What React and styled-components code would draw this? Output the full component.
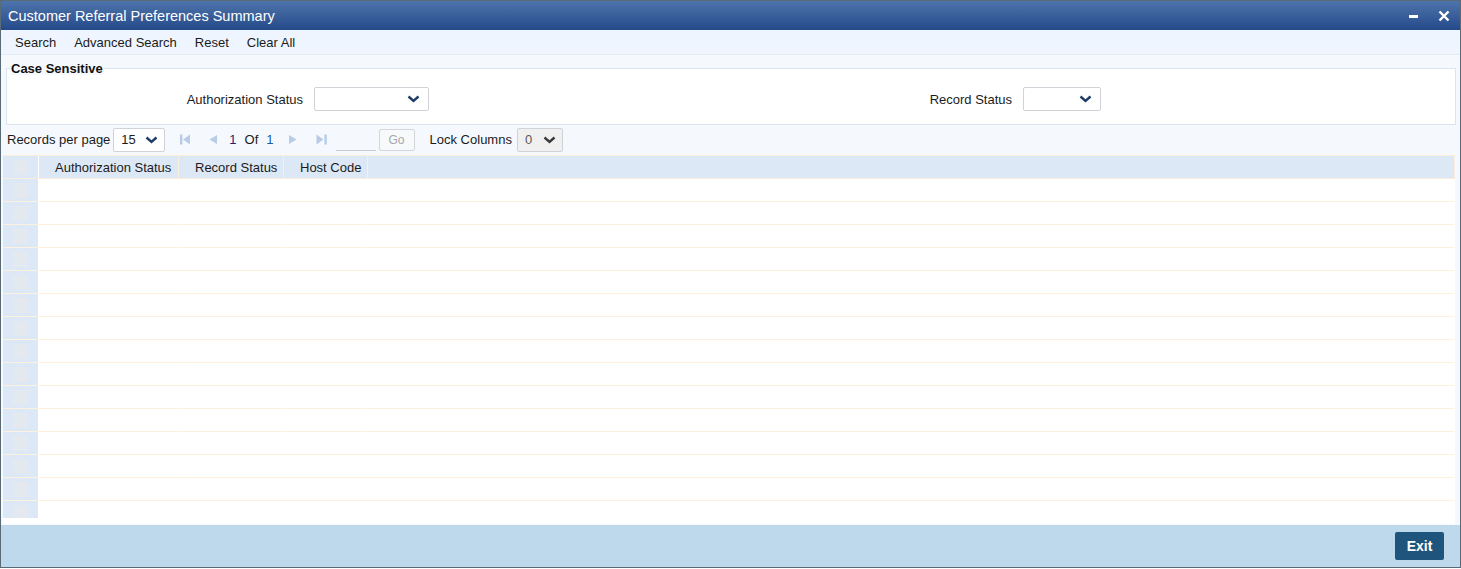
import React from 'react'
import styled, { createGlobalStyle } from 'styled-components'

const GlobalStyle = createGlobalStyle`
  html, body {
    margin: 0;
    padding: 0;
    background: #ffffff;
    font-family: 'Liberation Sans', Arial, sans-serif;
  }
  * { box-sizing: border-box; }
`

const Chevron = ({ color = '#1d3c66' }) => (
  <svg width="13" height="8" viewBox="0 0 13 8">
    <path d="M1.5 1.5 L6.5 6 L11.5 1.5" fill="none" stroke={color} strokeWidth="2.4" />
  </svg>
)

const PageIcon = ({ type }) => (
  <svg width="11" height="11" viewBox="0 0 11 11">
    {type === 'first' && (
      <>
        <rect x="0" y="0.5" width="2.4" height="10" fill="#b7cce6" />
        <path d="M10 0.5 L3 5.5 L10 10.5 Z" fill="#b7cce6" />
      </>
    )}
    {type === 'prev' && <path d="M9 1 L1.5 5.5 L9 10 Z" fill="#b7cce6" />}
    {type === 'next' && <path d="M2 1 L9.5 5.5 L2 10 Z" fill="#b7cce6" />}
    {type === 'last' && (
      <>
        <path d="M0.5 0.5 L7.5 5.5 L0.5 10.5 Z" fill="#b7cce6" />
        <rect x="8.4" y="0.5" width="2.4" height="10" fill="#b7cce6" />
      </>
    )}
  </svg>
)

const columns = [
  { title: 'Authorization Status', width: 140 },
  { title: 'Record Status', width: 105 },
  { title: 'Host Code', width: 84 },
]

const rows = Array.from({ length: 15 }, (_, i) => i)

export default function App() {
  return (
    <>
      <GlobalStyle />
      <Window>
        <TitleBar>
          <Title>Customer Referral Preferences Summary</Title>
          <WindowControls>
            <Minimize />
            <svg width="12" height="12" viewBox="0 0 12 12">
              <path d="M1.5 1.5 L10.5 10.5 M10.5 1.5 L1.5 10.5" stroke="#fff" strokeWidth="2.4" />
            </svg>
          </WindowControls>
        </TitleBar>

        <Toolbar>
          <ToolItem>Search</ToolItem>
          <ToolItem>Advanced Search</ToolItem>
          <ToolItem>Reset</ToolItem>
          <ToolItem>Clear All</ToolItem>
        </Toolbar>

        <Main>
          <Fieldset>
            <Legend>Case Sensitive</Legend>
            <FieldRow>
              <Field $width={723}>
                <Label $width={307}>Authorization Status</Label>
                <Select $width={115}>
                  <Chevron />
                </Select>
              </Field>
              <Field>
                <Label $width={293}>Record Status</Label>
                <Select $width={78}>
                  <Chevron />
                </Select>
              </Field>
            </FieldRow>
          </Fieldset>

          <Pager>
            <PagerText>Records per page</PagerText>
            <SmallSelect $ml={3} $width={52}>
              <span>15</span>
              <Chevron />
            </SmallSelect>
            <IconSlot $ml={15}><PageIcon type="first" /></IconSlot>
            <IconSlot $ml={17}><PageIcon type="prev" /></IconSlot>
            <PageNum $ml={10} $color="#2b1c6e">1</PageNum>
            <PagerText $ml={8}>Of</PagerText>
            <PageNum $ml={8} $color="#1d5aa8">1</PageNum>
            <IconSlot $ml={13}><PageIcon type="next" /></IconSlot>
            <IconSlot $ml={18}><PageIcon type="last" /></IconSlot>
            <PageInput />
            <GoButton>Go</GoButton>
            <PagerText $ml={15}>Lock Columns</PagerText>
            <SmallSelect $ml={5} $width={46} $disabled>
              <span>0</span>
              <Chevron color="#3a3a3a" />
            </SmallSelect>
          </Pager>

          <Table>
            <HeaderRow>
              <CheckCell $header>
                <CheckBox />
              </CheckCell>
              {columns.map((c) => (
                <HeaderCell key={c.title} $width={c.width}>
                  {c.title}
                </HeaderCell>
              ))}
              <Filler />
            </HeaderRow>
            <Body>
              {rows.map((r) => (
                <Row key={r}>
                  <CheckCell>
                    <CheckBox />
                  </CheckCell>
                  {columns.map((c) => (
                    <Cell key={c.title} $width={c.width} />
                  ))}
                  <Cell />
                </Row>
              ))}
            </Body>
          </Table>
        </Main>

        <Footer>
          <ExitButton>Exit</ExitButton>
        </Footer>
      </Window>
    </>
  )
}

const Window = styled.div`
  display: flex;
  flex-direction: column;
  width: 1461px;
  height: 568px;
  border: 1px solid #5a6b78;
  overflow: hidden;
  background: #f5f9fe;
`

const TitleBar = styled.div`
  height: 29px;
  flex-shrink: 0;
  display: flex;
  align-items: center;
  justify-content: space-between;
  padding: 0 10px 0 7px;
  background: linear-gradient(to bottom, #4d74ac 0%, #3a5f9a 50%, #23498a 100%);
`

const Title = styled.div`
  color: #ffffff;
  font-size: 14.5px;
`

const WindowControls = styled.div`
  display: flex;
  align-items: center;
  gap: 20px;
`

const Minimize = styled.span`
  display: block;
  width: 9px;
  height: 3px;
  background: #ffffff;
  margin-top: 2px;
`

const Toolbar = styled.div`
  height: 25px;
  flex-shrink: 0;
  display: flex;
  align-items: center;
  gap: 18px;
  padding-left: 14px;
  background: #eef5fe;
  border-bottom: 1px solid #e2eaf4;
`

const ToolItem = styled.span`
  font-size: 13px;
  color: #1b1b1b;
`

const Main = styled.div`
  flex: 1;
  display: flex;
  flex-direction: column;
  background: #f5f9fe;
`

const Fieldset = styled.fieldset`
  margin: 7px 4px 0 5px;
  padding: 12px 0 13px 0;
  border: 1px solid #dbe4f1;
  background: #ffffff;
  min-width: 0;
`

const Legend = styled.legend`
  padding: 0 1px;
  margin-left: 3px;
  font-size: 13px;
  line-height: 13px;
  font-weight: bold;
  color: #111;
  background: #f5f9fe;
`

const FieldRow = styled.div`
  display: flex;
  align-items: center;
  height: 24px;
`

const Field = styled.div`
  display: flex;
  align-items: center;
  width: ${(p) => (p.$width ? `${p.$width}px` : 'auto')};
`

const Label = styled.label`
  width: ${(p) => p.$width}px;
  text-align: right;
  padding-right: 11px;
  font-size: 13px;
  color: #1b1b1b;
`

const Select = styled.div`
  width: ${(p) => p.$width}px;
  height: 24px;
  display: flex;
  align-items: center;
  justify-content: flex-end;
  padding-right: 8px;
  border: 1px solid #cfd3d8;
  border-radius: 2px;
  background: #ffffff;
`

const Pager = styled.div`
  display: flex;
  align-items: center;
  height: 25px;
  margin-top: 2px;
  padding-left: 6px;
`

const PagerText = styled.span`
  margin-left: ${(p) => p.$ml || 0}px;
  font-size: 13px;
  color: #1b1b1b;
`

const PageNum = styled.span`
  margin-left: ${(p) => p.$ml || 0}px;
  font-size: 13px;
  color: ${(p) => p.$color};
`

const SmallSelect = styled.div`
  margin-left: ${(p) => p.$ml || 0}px;
  width: ${(p) => p.$width}px;
  height: 24px;
  display: flex;
  align-items: center;
  justify-content: space-between;
  padding: 0 6px 0 7px;
  border: 1px solid #cfd3d8;
  border-radius: 2px;
  background: ${(p) => (p.$disabled ? '#f0f0f0' : '#ffffff')};
  font-size: 13px;
  color: ${(p) => (p.$disabled ? '#5a5a5a' : '#1b1b1b')};
`

const IconSlot = styled.span`
  display: flex;
  align-items: center;
  margin-left: ${(p) => p.$ml || 0}px;
`

const PageInput = styled.div`
  width: 40px;
  height: 22px;
  margin-left: 9px;
  border-bottom: 1px solid #c9cdd2;
`

const GoButton = styled.div`
  width: 36px;
  height: 22px;
  margin-left: 3px;
  display: flex;
  align-items: center;
  justify-content: center;
  border: 1px solid #d3d6da;
  border-radius: 2px;
  background: #f8f9fa;
  font-size: 12px;
  color: #a4a8ad;
`

const Table = styled.div`
  margin: 3px 5px 0 2px;
  height: 369px;
  background: #ffffff;
  display: flex;
  flex-direction: column;
`

const HeaderRow = styled.div`
  display: flex;
  height: 24px;
  flex-shrink: 0;
  background: #dde8f6;
  border: 1px solid #fbeedd;
  border-left: none;
`

const CheckCell = styled.div`
  width: 36px;
  flex-shrink: 0;
  display: flex;
  align-items: center;
  justify-content: center;
  background: #dde8f6;
  border-right: 1px solid #ffffff;
  border-bottom: ${(p) => (p.$header ? 'none' : '1px solid #fdf0dc')};
`

const CheckBox = styled.span`
  display: block;
  width: 15px;
  height: 15px;
  background: #e4e8ef;
`

const HeaderCell = styled.div`
  width: ${(p) => p.$width}px;
  flex-shrink: 0;
  display: flex;
  align-items: center;
  padding: 0 7px 0 16px;
  border-right: 1px solid #fbeedd;
  font-size: 13px;
  color: #1b1b1b;
  white-space: nowrap;
`

const Filler = styled.div`
  flex: 1;
`

const Body = styled.div`
  height: 339px;
  overflow: hidden;
`

const Row = styled.div`
  display: flex;
  height: 23px;
`

const Cell = styled.div`
  ${(p) => (p.$width ? `width: ${p.$width}px; flex-shrink: 0;` : 'flex: 1;')}
  border-bottom: 1px solid #fdf0dc;
  border-right: 1px solid #ffffff;
`

const Footer = styled.div`
  height: 42px;
  flex-shrink: 0;
  display: flex;
  align-items: center;
  justify-content: flex-end;
  padding-right: 16px;
  background: #bed8ec;
`

const ExitButton = styled.button`
  width: 49px;
  height: 28px;
  border: none;
  border-radius: 2px;
  background: #1f557d;
  color: #ffffff;
  font-family: 'Liberation Sans', Arial, sans-serif;
  font-size: 14px;
  font-weight: bold;
  cursor: pointer;
`
